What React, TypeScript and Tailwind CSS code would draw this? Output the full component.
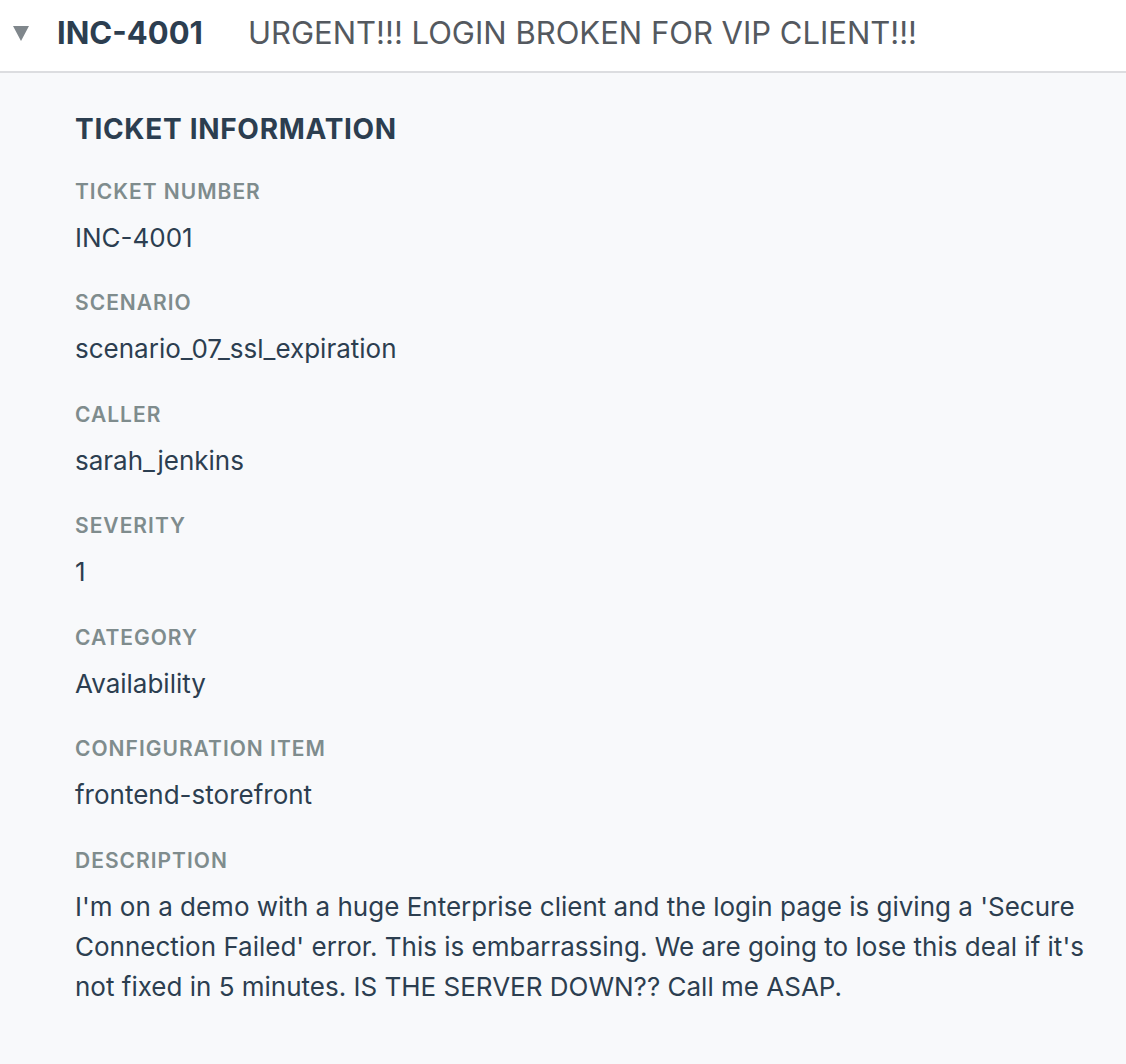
import React from "react";

type Field = { label: string; value: string };

const FIELDS: Field[] = [
  { label: "Ticket Number", value: "INC-4001" },
  { label: "Scenario", value: "scenario_07_ssl_expiration" },
  { label: "Caller", value: "sarah_jenkins" },
  { label: "Severity", value: "1" },
  { label: "Category", value: "Availability" },
  { label: "Configuration Item", value: "frontend-storefront" },
  {
    label: "Description",
    value:
      "I'm on a demo with a huge Enterprise client and the login page is giving a 'Secure Connection Failed' error. This is embarrassing. We are going to lose this deal if it's not fixed in 5 minutes. IS THE SERVER DOWN?? Call me ASAP.",
  },
];

export default function App() {
  return (
    <div className="min-h-screen bg-[#f8f9fb] font-['Inter','Noto_Sans',sans-serif]">
      {/* header row */}
      <div className="flex h-[71px] items-center bg-white pb-[4px] pl-[13px]">
        <svg width="16" height="15" viewBox="0 0 16 15" className="mr-[28px] shrink-0">
          <polygon points="0,0 16,0 8,15" fill="#80878c" />
        </svg>
        <span className="text-[31px] font-bold text-[#2c3e50]">INC-4001</span>
        <span className="ml-[45px] text-[31px] text-[#54595f]">
          URGENT!!! LOGIN BROKEN FOR VIP CLIENT!!!
        </span>
      </div>
      <div className="h-[2px] bg-[#dcdde0]" />

      <div className="pl-[75px] pr-[24px] pt-[40px] pb-[40px]">
        <h2 className="mb-[32px] text-[28px] font-bold uppercase leading-[1.2] tracking-[0.7px] text-[#2c3e50]">
          Ticket Information
        </h2>
        <div className="flex flex-col gap-[32.5px]">
          {FIELDS.map((f) => (
            <div key={f.label}>
              <div className="text-[21px] font-semibold uppercase leading-[26px] tracking-[1px] text-[#7f8c8d]">
                {f.label}
              </div>
              <div className="mt-[13px] text-[26px] leading-[40px] text-[#2c3e50]">{f.value}</div>
            </div>
          ))}
        </div>
      </div>
    </div>
  );
}
